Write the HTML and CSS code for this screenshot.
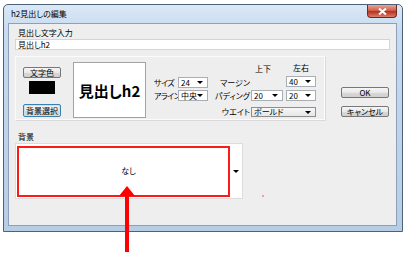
FILE: index.html
```html
<!DOCTYPE html>
<html>
<head>
  <meta charset="UTF-8">
  <title>h2見出しの編集</title>
  <link rel="stylesheet" href="styles.css">
</head>
<body>
<div class="window">
  <div class="titlebar">
    <span class="title">h2見出しの編集</span>
    <span class="close">
      <svg width="9" height="7" viewBox="0 0 9 7"><path d="M1 0.5 L8 6.5 M8 0.5 L1 6.5" stroke="#fff" stroke-width="2"/></svg>
    </span>
  </div>

  <div class="client">
    <div class="label">見出し文字入力</div>
    <div class="textbox">見出しh2</div>

    <div class="middle">
      <div class="panel">
        <div class="colors">
          <button type="button" class="btn small">文字色</button>
          <div class="swatch"></div>
          <button type="button" class="btn default">背景選択</button>
        </div>

        <div class="preview">見出しh2</div>

        <div class="params">
          <span class="head col-tb">上下</span>
          <span class="head col-lr">左右</span>

          <span class="name r1 c1">サイズ</span>
          <span class="combo r1 c2">24</span>
          <span class="name right r1 c3">マージン</span>
          <span class="combo r1 c5">40</span>

          <span class="name r2 c1">アライン</span>
          <span class="combo r2 c2">中央</span>
          <span class="name right r2 c3">パディング</span>
          <span class="combo r2 c4">20</span>
          <span class="combo r2 c5">20</span>

          <span class="name right r3 c3">ウエイト</span>
          <span class="combo list r3 wide">ボールド</span>
        </div>
      </div>

      <div class="actions">
        <button type="button" class="btn">OK</button>
        <button type="button" class="btn">キャンセル</button>
      </div>
    </div>

    <div class="label bg-label">背景</div>
    <div class="bg-combo">
      <span class="bg-value">なし</span>
      <span class="arrow"></span>
      <div class="highlight"></div>
    </div>
    <div class="speck"></div>
  </div>
</div>

<div class="pointer">
  <div class="head-tri"></div>
  <div class="shaft"></div>
</div>
</body>
</html>
```

FILE: styles.css
```css
body {
  margin: 0;
  background: #fff;
  font-family: "Noto Sans CJK JP", sans-serif;
  font-feature-settings: "palt";
  font-size: 8px;
  line-height: 10px;
  color: #000;
  position: relative;
  width: 408px;
  height: 261px;
  overflow: hidden;
}

.window {
  margin: 4px 0 0 3px;
  width: 400px;
  height: 228px;
  box-sizing: border-box;
  border: 1px solid #4d6178;
  border-radius: 5px 5px 0 0;
  background: linear-gradient(180deg, #dbe8f6 0%, #c6daf0 12%, #b7cde6 100%);
  padding: 0 5px 5px 4px;
  display: flex;
  flex-direction: column;
}

.titlebar {
  height: 18px;
  display: flex;
  align-items: flex-start;
}

.title {
  align-self: center;
  padding-left: 3px;
}

.close {
  margin-left: auto;
  width: 30px;
  height: 13px;
  box-sizing: border-box;
  border: 1px solid #6e2a22;
  border-top: none;
  border-radius: 0 0 4px 4px;
  background: linear-gradient(180deg, #e8a595 0%, #d0614f 45%, #b8321f 55%, #d7806a 100%);
  display: flex;
  align-items: center;
  justify-content: center;
}

.client {
  flex: 1;
  position: relative;
  background: #eeeeee;
  border: 1px solid #8ca1b9;
  padding: 4px 0 0 6px;
}

.label {
  padding-left: 3px;
  height: 10px;
}

.textbox {
  margin-top: 1px;
  width: 375px;
  height: 11px;
  box-sizing: border-box;
  background: #fff;
  border: 1px solid #d4d4d4;
  padding-left: 2px;
  line-height: 9px;
}

.middle {
  display: flex;
  margin-top: 6px;
}

.panel {
  width: 310px;
  height: 64px;
  box-sizing: border-box;
  border: 1px solid #fbfbfb;
  box-shadow: 1px 1px 0 #dadada;
  display: flex;
  align-items: flex-start;
}

.colors {
  width: 38px;
  margin-left: 7px;
  margin-top: 10px;
  display: flex;
  flex-direction: column;
  align-items: center;
}

.btn {
  font-family: inherit;
  font-feature-settings: "palt";
  font-size: 8px;
  line-height: 8px;
  padding: 0;
  margin: 0;
  color: #000;
  border: 1px solid #777;
  border-radius: 2px;
  background: linear-gradient(180deg, #f6f6f6 0%, #e8e8e8 50%, #d9d9d9 51%, #cfcfcf 100%);
}

.colors .btn {
  width: 38px;
}

.btn.small {
  height: 11px;
}

.btn.default {
  height: 13px;
  margin-top: 10px;
  border-color: #3c7fb1;
  box-shadow: inset 0 0 0 1px #bde4f7;
}

.swatch {
  margin-top: 3px;
  width: 26px;
  height: 13px;
  background: #000;
}

.preview {
  margin: 5px 0 0 12px;
  width: 73px;
  height: 56px;
  box-sizing: border-box;
  background: #fff;
  border: 1px solid #a3a3a3;
  font-size: 15px;
  font-weight: bold;
  display: flex;
  align-items: center;
  justify-content: center;
  line-height: 15px;
}

.params {
  margin: 6px 0 0 8px;
  display: grid;
  grid-template-columns: 24px 30px 43px 32px 3px 30px;
  grid-template-rows: 12px 11px 11px 14px;
  row-gap: 2px;
  align-items: center;
}

.head {
  grid-row: 1;
}

.col-tb {
  grid-column: 4;
  padding-left: 4px;
}

.col-lr {
  grid-column: 6;
  text-align: center;
  margin-top: -3px;
}

.r1 { grid-row: 2; }
.r2 { grid-row: 3; }
.r3 { grid-row: 4; align-self: end; }
.c1 { grid-column: 1; letter-spacing: -0.6px; }
.c2 { grid-column: 2; }
.c3 { grid-column: 3; }
.c4 { grid-column: 4; }
.c5 { grid-column: 6; }
.wide { grid-column: 4 / 7; }

.name {
  white-space: nowrap;
}

.name.right {
  text-align: right;
  padding-right: 1px;
}

.r3.name {
  line-height: 10px;
}

.combo {
  position: relative;
  height: 11px;
  box-sizing: border-box;
  background: #fff;
  border: 1px solid #a9aeb5;
  padding-left: 2px;
  line-height: 9px;
  white-space: nowrap;
  letter-spacing: 0;
}

.combo.r1.c5 {
  margin-top: -3px;
}

.combo.list {
  height: 10px;
  line-height: 8px;
  background: linear-gradient(180deg, #f7f7f7, #e6e6e6);
  border-color: #8e8e8e;
}

.combo::after {
  content: "";
  position: absolute;
  right: 4px;
  top: 3px;
  border-left: 3px solid transparent;
  border-right: 3px solid transparent;
  border-top: 3px solid #000;
}

.actions {
  margin: 31px 0 0 16px;
  display: flex;
  flex-direction: column;
  gap: 8px;
}

.actions .btn {
  width: 48px;
  height: 11px;
}

.bg-label {
  margin-top: 12px;
}

.bg-combo {
  position: relative;
  margin-top: 1px;
  width: 228px;
  height: 56px;
  box-sizing: border-box;
  background: #fff;
  border: 1px solid #dcdcdc;
  display: flex;
  align-items: center;
}

.bg-value {
  flex: 1;
  text-align: center;
  padding-left: 8px;
}

.arrow {
  width: 0;
  height: 0;
  margin-right: 3px;
  border-left: 3px solid transparent;
  border-right: 3px solid transparent;
  border-top: 3px solid #000;
}

.highlight {
  position: absolute;
  left: 1px;
  top: 2px;
  width: 213px;
  height: 51px;
  box-sizing: border-box;
  border: 2px solid #ff1a1a;
}

.speck {
  position: absolute;
  left: 253px;
  top: 171px;
  width: 2px;
  height: 2px;
  background: #f3a0a0;
}

.pointer {
  position: absolute;
  left: 118px;
  top: 186px;
  width: 17px;
  display: flex;
  flex-direction: column;
  align-items: center;
}

.head-tri {
  width: 0;
  height: 0;
  border-left: 8px solid transparent;
  border-right: 8px solid transparent;
  border-bottom: 10px solid #ff0000;
}

.shaft {
  width: 4px;
  height: 56px;
  background: #ff0000;
}
```
